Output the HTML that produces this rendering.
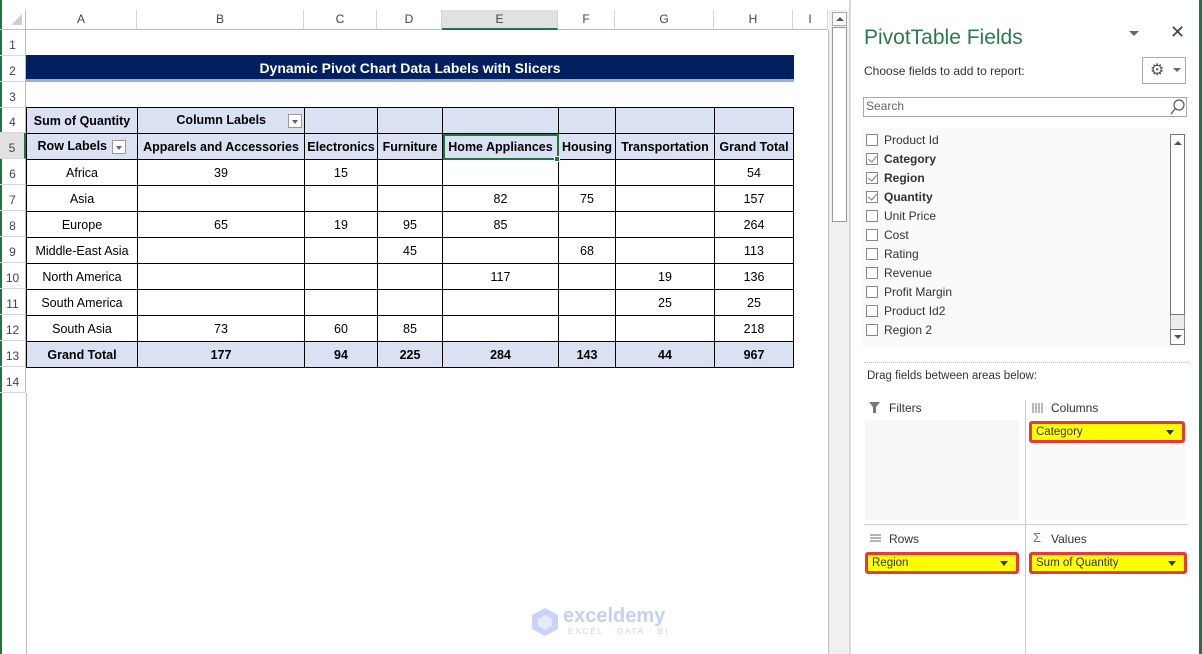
<!DOCTYPE html>
<html><head><meta charset="utf-8"><style>
*{box-sizing:border-box;margin:0;padding:0}
body{width:1202px;height:654px;overflow:hidden;background:#fff;font-family:"Liberation Sans",sans-serif;position:relative}
.a{position:absolute}
.ch{position:absolute;top:10px;height:20px;border-right:1px solid #d4d4d4;border-bottom:1px solid #bdbdbd;font-size:12px;color:#444;text-align:center;line-height:19px;background:#fff}
.rh{position:absolute;left:0;width:26px;height:26px;border-bottom:1px solid #d8d8d8;border-right:1px solid #bdbdbd;font-size:12px;color:#444;text-align:center;line-height:30px}
table{position:absolute;left:26px;top:107px;border-collapse:collapse;font-size:12.5px;color:#000}
td{height:26px;border:1px solid #000;text-align:center;padding:0;white-space:nowrap}
tr.h td{background:#d9e1f2;font-weight:bold}
.fl{display:inline-block;width:14px;height:14px;border:1px solid #999;background:#fff;vertical-align:middle;position:relative;margin-left:4px}
.fl:after{content:"";position:absolute;left:3px;top:5px;border:3px solid transparent;border-top:4px solid #666}
.cb{position:absolute;left:866px;width:12px;height:12px;border:1px solid #888;background:#fff}
.fn{position:absolute;left:884px;font-size:12px;color:#333}
.ck:after{content:"";position:absolute;left:3px;top:0px;width:4px;height:7px;border-right:1.5px solid #777;border-bottom:1.5px solid #777;transform:rotate(40deg)}
.yb{position:absolute;height:22px;background:#ffff00;border:3px solid #e8393a;border-radius:3px;font-size:11.5px;color:#333;line-height:16px;padding-left:4px}
.yb:after{content:"";position:absolute;right:8px;top:6px;border:4px solid transparent;border-top:5px solid #333}
</style></head><body>
<div class="a" style="left:0;top:0;width:2px;height:654px;background:#217346"></div>
<div class="a" style="left:0;top:10px;width:26px;height:20px;border-right:1px solid #bdbdbd;border-bottom:1px solid #bdbdbd"></div>
<div class="a" style="left:11px;top:14px;width:0;height:0;border-left:11px solid transparent;border-bottom:11px solid #d0d0d0"></div>
<div class="ch" style="left:26px;width:111px">A</div>
<div class="ch" style="left:137px;width:167px">B</div>
<div class="ch" style="left:304px;width:73px">C</div>
<div class="ch" style="left:377px;width:65px">D</div>
<div class="ch" style="left:442px;width:116px;background:#e1e1e1;border-bottom:2px solid #217346">E</div>
<div class="ch" style="left:558px;width:57px">F</div>
<div class="ch" style="left:615px;width:99px">G</div>
<div class="ch" style="left:714px;width:79px">H</div>
<div class="ch" style="left:793px;width:35px">I</div>
<div class="rh" style="top:30px">1</div>
<div class="rh" style="top:56px">2</div>
<div class="rh" style="top:82px">3</div>
<div class="rh" style="top:107px">4</div>
<div class="rh" style="top:133px;background:#e1e1e1;border-right:2px solid #217346">5</div>
<div class="rh" style="top:159px">6</div>
<div class="rh" style="top:185px">7</div>
<div class="rh" style="top:211px">8</div>
<div class="rh" style="top:237px">9</div>
<div class="rh" style="top:263px">10</div>
<div class="rh" style="top:289px">11</div>
<div class="rh" style="top:315px">12</div>
<div class="rh" style="top:341px">13</div>
<div class="rh" style="top:367px">14</div>
<div class="a" style="left:26px;top:393px;width:1px;height:261px;background:#bdbdbd"></div>
<div class="a" style="left:828px;top:30px;width:1px;height:624px;background:#bdbdbd"></div>
<div class="a" style="left:26px;top:55px;width:768px;height:24px;background:#002060;color:#fff;font-weight:bold;font-size:14px;text-align:center;line-height:27px">Dynamic Pivot Chart Data Labels with Slicers</div>
<div class="a" style="left:26px;top:79px;width:768px;height:3px;background:#9bb0d9"></div>
<table>
<colgroup><col style="width:111px"><col style="width:167px"><col style="width:73px"><col style="width:65px"><col style="width:116px"><col style="width:57px"><col style="width:99px"><col style="width:79px"></colgroup>
<tr class="h"><td>Sum of Quantity</td><td style="text-align:right;padding-right:2px">Column Labels<span style="display:inline-block;width:18px"></span><span class="fl"></span></td><td></td><td></td><td></td><td></td><td></td><td></td></tr>
<tr class="h"><td>Row Labels <span class="fl" style="margin-left:2px"></span></td><td>Apparels and Accessories</td><td>Electronics</td><td>Furniture</td><td style="outline:2px solid #217346;outline-offset:-2px">Home Appliances</td><td>Housing</td><td>Transportation</td><td>Grand Total</td></tr>
<tr><td>Africa</td><td>39</td><td>15</td><td></td><td></td><td></td><td></td><td>54</td></tr>
<tr><td>Asia</td><td></td><td></td><td></td><td>82</td><td>75</td><td></td><td>157</td></tr>
<tr><td>Europe</td><td>65</td><td>19</td><td>95</td><td>85</td><td></td><td></td><td>264</td></tr>
<tr><td>Middle-East Asia</td><td></td><td></td><td>45</td><td></td><td>68</td><td></td><td>113</td></tr>
<tr><td>North America</td><td></td><td></td><td></td><td>117</td><td></td><td>19</td><td>136</td></tr>
<tr><td>South America</td><td></td><td></td><td></td><td></td><td></td><td>25</td><td>25</td></tr>
<tr><td>South Asia</td><td>73</td><td>60</td><td>85</td><td></td><td></td><td></td><td>218</td></tr>
<tr class="h"><td>Grand Total</td><td>177</td><td>94</td><td>225</td><td>284</td><td>143</td><td>44</td><td>967</td></tr>
</table>
<div class="a" style="left:554px;top:156px;width:6px;height:6px;background:#217346;border:1px solid #fff"></div>
<div class="a" style="left:829px;top:10px;width:20px;height:644px;background:#f0f0f0"></div>
<div class="a" style="left:832px;top:12px;width:15px;height:14px;border:1px solid #aaa;background:#fff"></div>
<div class="a" style="left:836px;top:17px;border:4px solid transparent;border-bottom:4px solid #555;border-top:0"></div>
<div class="a" style="left:832px;top:27px;width:15px;height:195px;border:1px solid #999;background:#fff"></div>
<div class="a" style="left:849px;top:0;width:2px;height:654px;background:#d9d9d9"></div>
<div class="a" style="left:1199px;top:0;width:3px;height:654px;background:#217346"></div>
<div class="a" style="left:864px;top:26px;font-size:21px;color:#2b7a4b">PivotTable Fields</div>
<div class="a" style="left:1129px;top:31px;border:5px solid transparent;border-top:5px solid #666"></div>
<div class="a" style="left:1170px;top:22px;font-size:18px;color:#444">✕</div>
<div class="a" style="left:864px;top:64px;font-size:12px;color:#333">Choose fields to add to report:</div>
<div class="a" style="left:1142px;top:57px;width:44px;height:27px;border:1px solid #aaa"></div>
<div class="a" style="left:1150px;top:60px;font-size:16px;color:#555">⚙</div>
<div class="a" style="left:1173px;top:68px;border:4px solid transparent;border-top:4px solid #666"></div>
<div class="a" style="left:863px;top:97px;width:324px;height:20px;border:1px solid #aaa;font-size:12px;color:#666;padding-left:2px;line-height:17px">Search</div>
<svg class="a" style="left:1169px;top:98px" width="17" height="17"><circle cx="10" cy="7" r="5" fill="none" stroke="#555" stroke-width="1.2"/><line x1="6" y1="11" x2="2" y2="16" stroke="#555" stroke-width="1.3"/></svg>
<div class="a" style="left:863px;top:128px;width:324px;height:220px;background:#fafafa"></div>
<div class="a" style="left:1170px;top:134px;width:15px;height:211px;border:1px solid #999;background:#ececec"></div>
<div class="a" style="left:1170px;top:134px;width:15px;height:181px;border:1px solid #777;background:#fff"></div>
<div class="a" style="left:1174px;top:141px;border:4px solid transparent;border-bottom:4px solid #555;border-top:0"></div>
<div class="a" style="left:1170px;top:329px;width:15px;height:16px;border:1px solid #777;background:#fff"></div>
<div class="a" style="left:1174px;top:335px;border:4px solid transparent;border-top:4px solid #555"></div>
<div class="cb" style="top:134px"></div><div class="fn" style="top:133px">Product Id</div>
<div class="cb ck" style="top:153px"></div><div class="fn" style="top:152px;font-weight:bold">Category</div>
<div class="cb ck" style="top:172px"></div><div class="fn" style="top:171px;font-weight:bold">Region</div>
<div class="cb ck" style="top:191px"></div><div class="fn" style="top:190px;font-weight:bold">Quantity</div>
<div class="cb" style="top:210px"></div><div class="fn" style="top:209px">Unit Price</div>
<div class="cb" style="top:229px"></div><div class="fn" style="top:228px">Cost</div>
<div class="cb" style="top:248px"></div><div class="fn" style="top:247px">Rating</div>
<div class="cb" style="top:267px"></div><div class="fn" style="top:266px">Revenue</div>
<div class="cb" style="top:286px"></div><div class="fn" style="top:285px">Profit Margin</div>
<div class="cb" style="top:305px"></div><div class="fn" style="top:304px">Product Id2</div>
<div class="cb" style="top:324px"></div><div class="fn" style="top:323px">Region 2</div>
<div class="a" style="left:864px;top:362px;width:324px;border-top:1px dotted #bbb"></div>
<div class="a" style="left:867px;top:370px;font-size:11.5px;color:#333">Drag fields between areas below:</div>
<div class="a" style="left:865px;top:420px;width:154px;height:100px;background:#f7f7f7"></div>
<div class="a" style="left:1027px;top:440px;width:158px;height:80px;background:#fafafa"></div>
<div class="a" style="left:1025px;top:400px;width:1px;height:254px;background:#ccc"></div>
<div class="a" style="left:864px;top:524px;width:324px;height:1px;background:#ccc"></div>
<svg class="a" style="left:869px;top:402px" width="12" height="12"><path d="M0 0H11L7 5V11H4V5Z" fill="#777"/></svg>
<div class="a" style="left:889px;top:401px;font-size:12px;color:#333">Filters</div>
<svg class="a" style="left:1032px;top:403px" width="12" height="10"><path d="M1 0V10M4 0V10M7 0V10M10 0V10" stroke="#888" stroke-width="1.2"/></svg>
<div class="a" style="left:1051px;top:401px;font-size:12px;color:#333">Columns</div>
<svg class="a" style="left:870px;top:534px" width="12" height="10"><path d="M0 1H11M0 4H11M0 7H11" stroke="#888" stroke-width="1.2"/></svg>
<div class="a" style="left:889px;top:532px;font-size:12px;color:#333">Rows</div>
<div class="a" style="left:1033px;top:530px;font-size:13px;color:#777">Σ</div>
<div class="a" style="left:1051px;top:532px;font-size:12px;color:#333">Values</div>
<div class="yb" style="left:1029px;top:421px;width:156px">Category</div>
<div class="yb" style="left:865px;top:552px;width:154px">Region</div>
<div class="yb" style="left:1029px;top:552px;width:158px">Sum of Quantity</div>
<svg class="a" style="left:530px;top:607px" width="30" height="30"><path d="M15 1L28 8V22L15 29L2 22V8Z" fill="#c9d3f5"/><path d="M15 8L22 12V19L15 23L8 19V12Z" fill="#e6ebfb"/></svg>
<div class="a" style="left:563px;top:605px;font-size:20px;font-weight:bold;color:#c6d0f3">exceldemy</div>
<div class="a" style="left:568px;top:627px;font-size:8px;letter-spacing:2px;color:#cdd3e6">EXCEL · DATA · BI</div>
</body></html>
